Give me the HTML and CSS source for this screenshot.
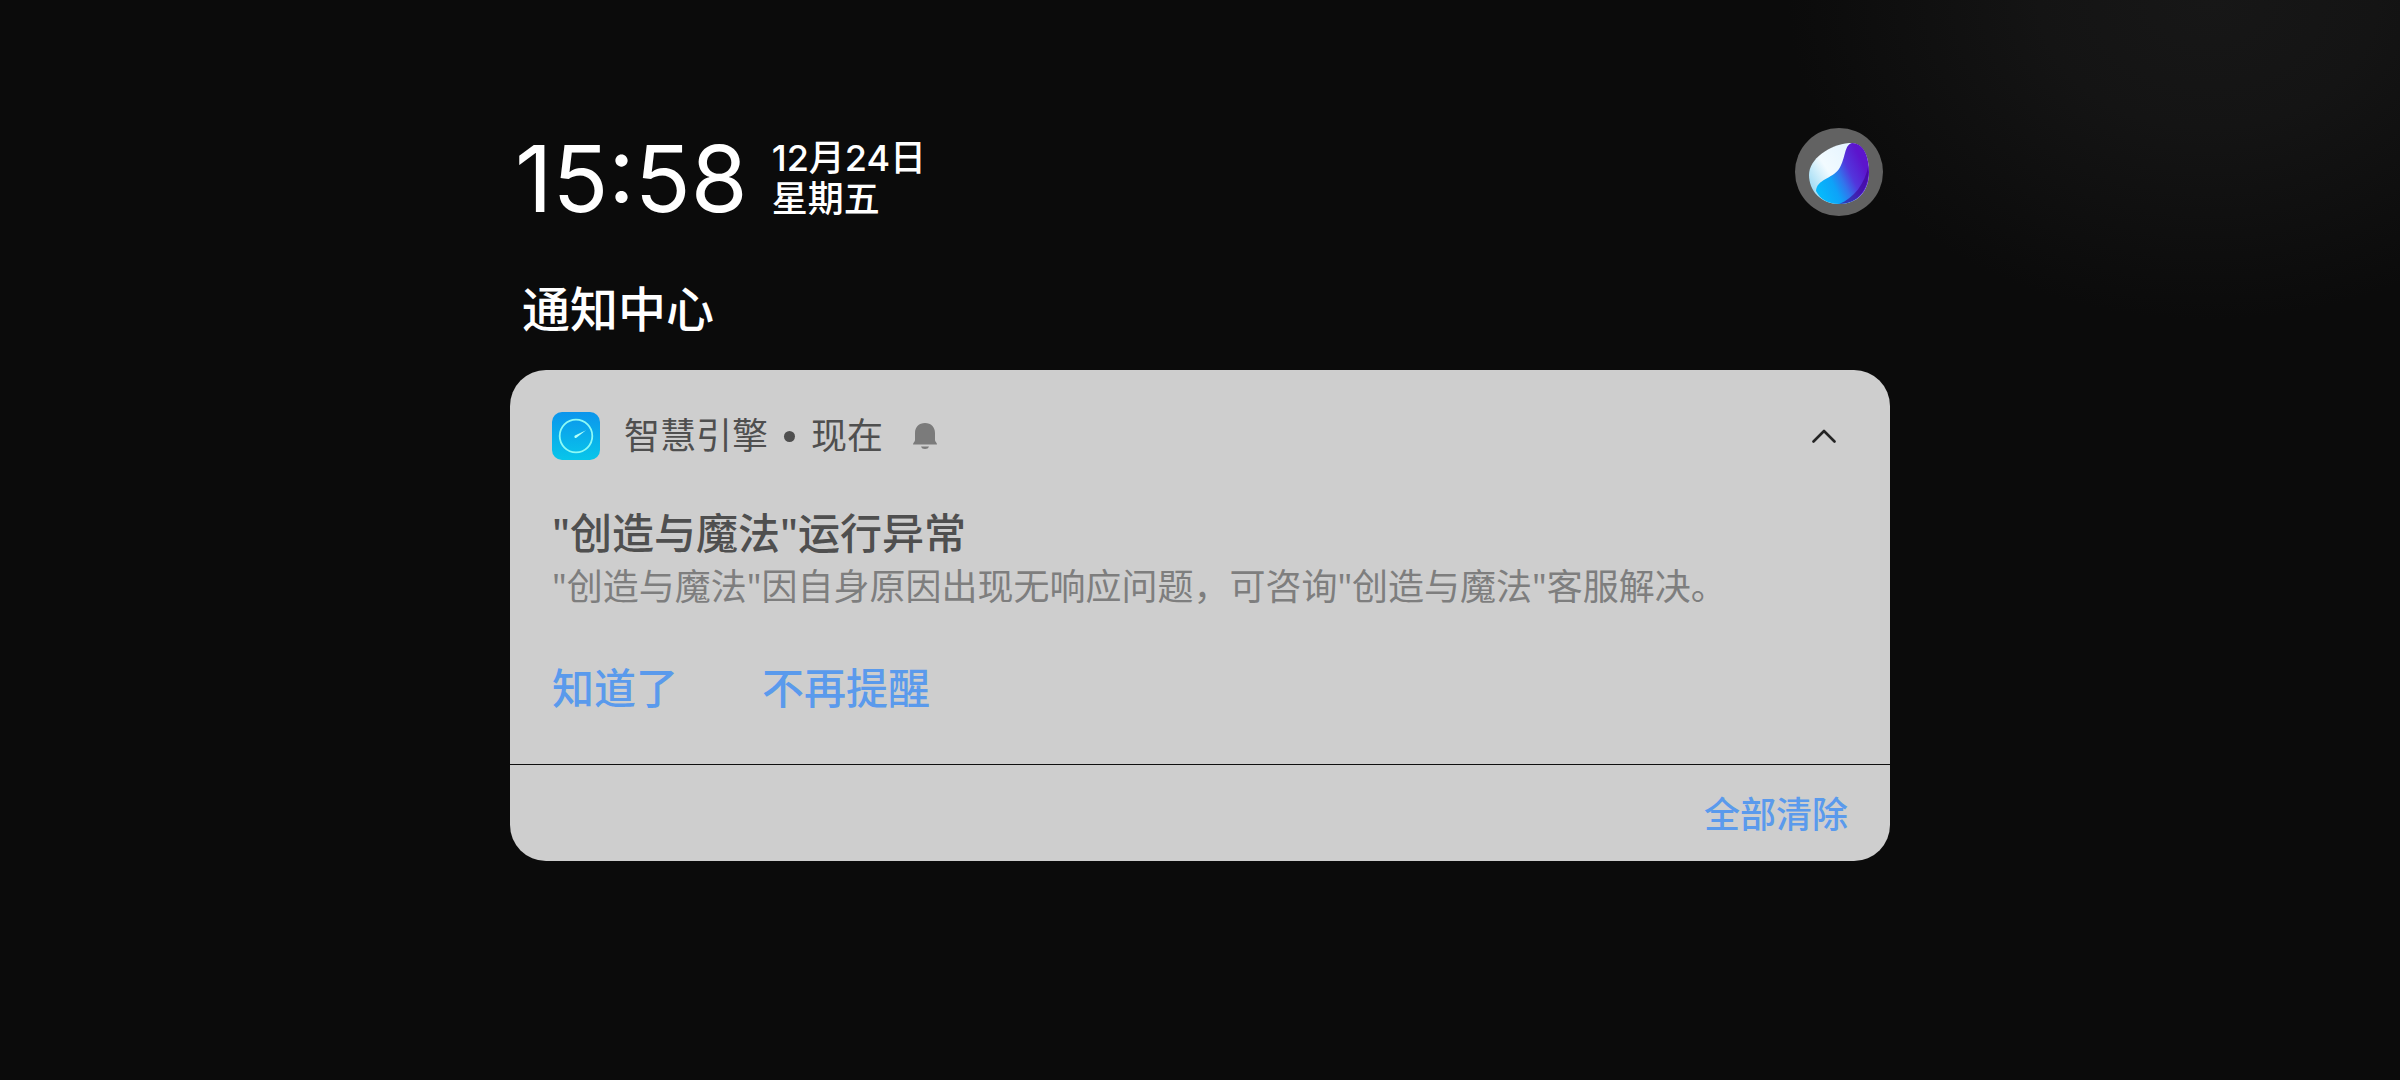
FILE: index.html
```html
<!DOCTYPE html>
<html lang="zh-CN">
<head>
<meta charset="utf-8">
<meta name="viewport" content="width=device-width, initial-scale=1">
<title>通知中心</title>
<link rel="stylesheet" href="styles.css">
</head>
<body>
<main class="panel">
  <header class="status">
    <time class="clock" datetime="15:58">15:58</time>
    <div class="date">
      <span>12月24日</span>
      <span>星期五</span>
    </div>
    <button class="assistant" type="button" aria-label="智慧助手">
      <svg viewBox="0 0 88 88" aria-hidden="true">
        <defs>
          <linearGradient id="pearl" x1="0.8" y1="0.2" x2="0.05" y2="0.7">
            <stop offset="0" stop-color="#e4f4ff"/>
            <stop offset="0.6" stop-color="#f2fbff"/>
            <stop offset="1" stop-color="#a6def5"/>
          </linearGradient>
          <linearGradient id="wave" gradientUnits="userSpaceOnUse" x1="24" y1="62" x2="70" y2="40">
            <stop offset="0" stop-color="#06b8fb"/>
            <stop offset="0.3" stop-color="#0ea2f8"/>
            <stop offset="0.5" stop-color="#3274ec"/>
            <stop offset="0.7" stop-color="#5236dc"/>
            <stop offset="1" stop-color="#5c14cc"/>
          </linearGradient>
        </defs>
        <circle cx="44" cy="44" r="44" fill="#626262"/>
        <path d="M14 47C14 31 34 17 54 15C68 14 74 28 74 44C74 64 62 76 44 76C26 76 14 63 14 47Z" fill="url(#pearl)"/>
        <path d="M57 15C69 15 74 29 74 44C74 64 62 76 44 76C33 76 25 71 21 63C22 51 37 51 44 41C51 30 49 17 57 15Z" fill="url(#wave)"/>
        <path d="M73.500 37C75 60 64 76 44 76C59 70 70 56 73.500 37Z" fill="#3c0090" fill-opacity="0.600"/>
      </svg>
    </button>
  </header>

  <h1 class="heading">通知中心</h1>

  <section class="card">
    <article class="notice">
      <div class="source">
        <svg class="app-icon" viewBox="0 0 48 48" aria-hidden="true">
          <defs>
            <linearGradient id="sky" x1="0" y1="0" x2="0" y2="1">
              <stop offset="0" stop-color="#0c95ec"/>
              <stop offset="1" stop-color="#08c6ea"/>
            </linearGradient>
          </defs>
          <rect width="48" height="48" rx="10" fill="url(#sky)"/>
          <circle cx="24" cy="24" r="16.3" fill="none" stroke="#8dfaf5" stroke-width="1.8"/>
          <path d="M23 23.6L34 18.2L24.4 25.8A1.2 1.2 0 0 1 23 23.6Z" fill="#b4fff8"/>
        </svg>
        <p class="source-text"><span>智慧引擎</span><span class="dot"></span><span>现在</span></p>
        <svg class="bell" viewBox="0 0 24 28" aria-hidden="true">
          <path d="M12 1C18 1 22 5 22 11V18C22 20 24 20.500 24 22.500H0C0 20.500 2 20 2 18V11C2 5 6 1 12 1ZM8 24.500H16C15.500 26.200 14 27 12 27S8.500 26.200 8 24.500Z" fill="#7b7b7b"/>
        </svg>
        <button class="collapse" type="button" aria-label="收起">
          <svg viewBox="0 0 24 14" aria-hidden="true"><path d="M1.500 12.500L12 2L22.500 12.500" fill="none" stroke="#242424" stroke-width="2.600" stroke-linecap="round" stroke-linejoin="round"/></svg>
        </button>
      </div>
      <h2 class="title">"创造与魔法"运行异常</h2>
      <p class="message">"创造与魔法"因自身原因出现无响应问题，可咨询"创造与魔法"客服解决。</p>
      <div class="actions">
        <button type="button">知道了</button>
        <button type="button">不再提醒</button>
      </div>
    </article>
    <footer class="footer">
      <button type="button">全部清除</button>
    </footer>
  </section>
</main>
</body>
</html>
```
FILE: styles.css
```css
* {
  box-sizing: border-box;
}

body {
  margin: 0;
  min-height: 100vh;
  background: radial-gradient(ellipse 420px 320px at 92% 0, #171717, #141414 40%, #0b0b0b) #0b0b0b;
  color: #fff;
  font-family: Inter, "Noto Sans CJK SC", sans-serif;
}

h1,
h2,
p {
  margin: 0;
}

button {
  padding: 0;
  border: 0;
  background: none;
  color: #5a9aec;
  font: inherit;
  font-weight: 500;
  cursor: pointer;
}

svg {
  display: block;
}

.panel {
  width: 57.5%;
  margin: 0 auto;
  padding: 128px 0 48px;
}

.status {
  display: flex;
  align-items: center;
  gap: 24px;
  padding: 0 7px 0 5px;
}

.clock {
  font-size: 92px;
  line-height: 102px;
}

.date {
  display: flex;
  flex-direction: column;
  font-size: 36px;
  font-weight: 500;
  line-height: 41px;
}

.assistant {
  align-self: flex-start;
  width: 88px;
  height: 88px;
  margin-left: auto;
}

.heading {
  padding: 44px 12px 24px;
  font-size: 48px;
  font-weight: 500;
  line-height: 72px;
}

.card {
  overflow: hidden;
  border-radius: 36px;
  background: #cecece;
  color: #4f4f4f;
}

.notice {
  padding: 40px 42px 45px;
}

.source {
  display: flex;
  align-items: center;
  height: 52px;
}

.app-icon {
  width: 48px;
  height: 48px;
}

.source-text {
  display: flex;
  align-items: center;
  gap: 16px;
  margin: 0 30px 0 24px;
  font-size: 36px;
  line-height: 52px;
}

.dot {
  width: 11px;
  height: 11px;
  border-radius: 50%;
  background: #4f4f4f;
}

.bell {
  width: 24px;
  height: 28px;
}

.collapse {
  display: grid;
  place-items: center;
  width: 48px;
  height: 48px;
  margin-left: auto;
}

.collapse svg {
  width: 24px;
  height: 14px;
}

.title,
.message {
  font-family: "Noto Sans", "Noto Sans CJK SC", sans-serif;
}

.title {
  margin-top: 41px;
  font-size: 42px;
  font-weight: 500;
  line-height: 60px;
}

.message {
  color: #7e7e7e;
  font-size: 36px;
  line-height: 48px;
}

.actions {
  display: flex;
  gap: 84px;
  margin-top: 48px;
  font-size: 42px;
  line-height: 60px;
}

.footer {
  display: flex;
  justify-content: flex-end;
  padding: 24px 42px 20px;
  border-top: 1px solid #0f0f0f;
  font-size: 36px;
  line-height: 52px;
}
```
